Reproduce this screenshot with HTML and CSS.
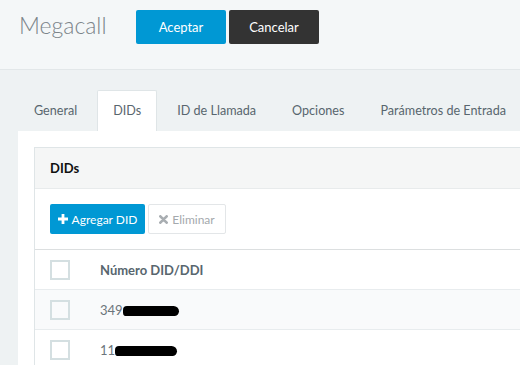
FILE: index.html
```html
<!DOCTYPE html>
<html lang="es">
<head>
    <meta charset="UTF-8">
    <meta name="viewport" content="width=device-width, initial-scale=1.0">
    <title>Megacall</title>
    <link rel="stylesheet" href="styles.css">
</head>
<body>
    <div class="topbar">
        <h1 class="title">Megacall</h1>
        <button class="btn btn-primary">Aceptar</button>
        <button class="btn btn-dark">Cancelar</button>
    </div>

    <div class="content">
        <ul class="tabs">
            <li>General</li>
            <li class="active">DIDs</li>
            <li>ID de Llamada</li>
            <li>Opciones</li>
            <li>Parámetros de Entrada</li>
        </ul>

        <div class="tab-pane">
            <div class="panel">
                <div class="panel-heading">DIDs</div>
                <div class="panel-body">
                    <button class="btn-sm btn-add">
                        <svg class="icon" width="10" height="10" viewBox="0 0 10 10"><path d="M3.6 0h2.8v3.6H10v2.8H6.4V10H3.6V6.4H0V3.6h3.6z" fill="#fff"/></svg>Agregar DID
                    </button>
                    <button class="btn-sm btn-del">
                        <svg class="icon" width="9" height="9" viewBox="0 0 10 10"><path d="M1.5 1.5l7 7M8.5 1.5l-7 7" stroke="#a9aeb2" stroke-width="3" stroke-linecap="round"/></svg>Eliminar
                    </button>
                </div>
                <table>
                    <thead>
                        <tr>
                            <th class="col-check"><span class="check"></span></th>
                            <th>Número DID/DDI</th>
                        </tr>
                    </thead>
                    <tbody>
                        <tr class="odd">
                            <td class="col-check"><span class="check"></span></td>
                            <td>349<span class="redact r1"></span></td>
                        </tr>
                        <tr>
                            <td class="col-check"><span class="check"></span></td>
                            <td>11<span class="redact r2"></span></td>
                        </tr>
                    </tbody>
                </table>
            </div>
        </div>
    </div>
</body>
</html>
```

FILE: styles.css
```css
html, body {
    margin: 0;
    padding: 0;
    overflow: hidden;
}
body {
    font-family: Lato, "Liberation Sans", sans-serif;
    font-size: 13px;
    color: #58666e;
    background-color: #eef2f3;
    width: 520px;
    height: 365px;
}
.topbar {
    display: flex;
    align-items: flex-start;
    height: 59px;
    padding: 10px 19px 0;
    background-color: #f4f7f8;
    border-bottom: 1px solid #e2e7e9;
}
.title {
    margin: -2px 32px 0 0;
    line-height: 34px;
    font-size: 23px;
    font-weight: 300;
    color: #7b848a;
    width: 85px;
}
.btn {
    width: 90px;
    height: 34px;
    margin: 0 3px 0 0;
    border: none;
    border-radius: 2px;
    font-family: inherit;
    font-size: 13px;
    color: #fff;
}
.btn-primary {
    background-color: #0098d4;
}
.btn-dark {
    background-color: #333333;
}
.content {
    padding-top: 20px;
}
.tabs {
    display: flex;
    margin: 0;
    padding: 0 0 0 18px;
    list-style: none;
    font-size: 12.6px;
}
.tabs li {
    padding: 10px 15px;
    line-height: 20px;
    margin-right: 4px;
    border: 1px solid transparent;
    border-bottom: none;
    white-space: nowrap;
}
.tabs li.active {
    background-color: #fff;
    border-color: #dfe5e7;
    border-radius: 2px 2px 0 0;
}
.tab-pane {
    margin-left: 18px;
    padding: 16px 0 0 16px;
    background-color: #fff;
    height: 218px;
    overflow: hidden;
}
.panel {
    border: 1px solid #dfe5e7;
    border-right: none;
}
.panel-heading {
    height: 40px;
    line-height: 40px;
    padding-left: 15px;
    background-color: #f5f6f6;
    border-bottom: 1px solid #e8ebec;
    font-weight: bold;
    color: #111;
}
.panel-body {
    display: flex;
    gap: 3px;
    padding: 15px;
}
.btn-sm {
    display: flex;
    align-items: center;
    justify-content: center;
    height: 30px;
    border-radius: 2px;
    font-family: inherit;
    font-size: 12px;
    padding: 0;
    white-space: nowrap;
}
.icon {
    margin-right: 4px;
}
.btn-add {
    width: 95px;
    background-color: #0098d4;
    color: #fff;
    border: none;
}
.btn-del {
    width: 78px;
    background-color: #fff;
    color: #a4a9ad;
    border: 1px solid #e3e6e8;
}
table {
    width: 100%;
    border-collapse: collapse;
    border-top: 1px solid #dcdfe0;
}
th, td {
    height: 39px;
    padding: 0;
    text-align: left;
    border-bottom: 1px solid #e8ecee;
}
th {
    font-weight: bold;
    color: #58666e;
}
td {
    color: #6c757b;
}
.col-check {
    width: 50px;
    padding-left: 15px;
}
.check {
    display: block;
    width: 16px;
    height: 16px;
    border: 2px solid #d4dfe1;
}
tr.odd {
    background-color: #f9fafb;
}
.redact {
    display: inline-block;
    background-color: #000;
    border-radius: 6px 8px 7px 5px;
    vertical-align: middle;
}
.r1 {
    width: 56px;
    height: 10px;
}
.r2 {
    width: 62px;
    height: 10px;
}
```
